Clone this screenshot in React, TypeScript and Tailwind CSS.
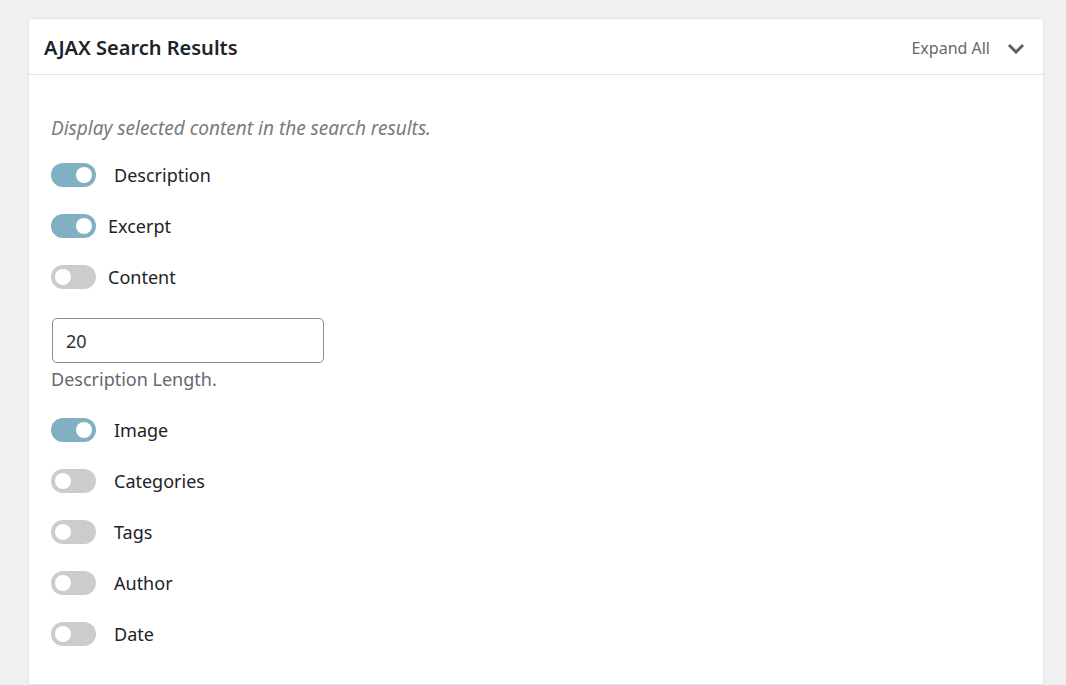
import React from "react";

const font = { fontFamily: '"Segoe UI", "Noto Sans", "Open Sans", sans-serif' };

type Row = { label: string; on: boolean; gap: string };

const Toggle = ({ on }: { on: boolean }) => (
  <span
    className={`relative inline-block h-[24px] w-[45px] shrink-0 rounded-full ${
      on ? "bg-[#80b0c2]" : "bg-[#cccccc]"
    }`}
  >
    <span
      className={`absolute top-[4px] h-[16px] w-[16px] rounded-full bg-white ${
        on ? "left-[25px]" : "left-[4px]"
      }`}
    />
  </span>
);

const ToggleRow = ({ label, on, gap }: Row) => (
  <div className={`flex h-[24px] items-center ${gap}`}>
    <Toggle on={on} />
    <span className="text-[18px] leading-[24px] text-[#1d2327]">{label}</span>
  </div>
);

const top: Row[] = [
  { label: "Description", on: true, gap: "gap-[18px]" },
  { label: "Excerpt", on: true, gap: "gap-[12px]" },
  { label: "Content", on: false, gap: "gap-[12px]" },
];

const bottom: Row[] = [
  { label: "Image", on: true, gap: "gap-[18px]" },
  { label: "Categories", on: false, gap: "gap-[18px]" },
  { label: "Tags", on: false, gap: "gap-[18px]" },
  { label: "Author", on: false, gap: "gap-[18px]" },
  { label: "Date", on: false, gap: "gap-[18px]" },
];

export default function App() {
  return (
    <div className="min-h-[685px] bg-[#f0f0f1] px-[28px] pt-[18px]" style={font}>
      <div className="h-[667px] w-[1016px] rounded-t-[5px] border border-[#e2e4e7] bg-white">
        <div className="flex h-[56px] items-center justify-between border-b border-[#e2e4e7] pl-[15px] pr-[18px] pt-[3px]">
          <h2 className="text-[20px] font-semibold leading-[28px] text-[#1d2327]">AJAX Search Results</h2>
          <button className="flex items-center gap-[17px] text-[16px] leading-[24px] text-[#646970]">
            Expand All
            <svg width="18" height="12" viewBox="0 0 18 12" fill="none">
              <path d="M2 3l7 7 7-7" stroke="#5b6066" strokeWidth="3" />
            </svg>
          </button>
        </div>
        <div className="px-[22px] pt-[41px]">
          <p className="h-[24px] text-[19px] italic leading-[24px] text-[#787c82]">
            Display selected content in the search results.
          </p>
          <div className="mt-[23px] flex flex-col gap-[27px]">
            {top.map((r) => (
              <ToggleRow key={r.label} {...r} />
            ))}
          </div>
          <input
            defaultValue="20"
            className="ml-[1px] mt-[29px] block h-[45px] w-[272px] rounded-[5px] border border-[#8c8f94] px-[13px] text-[18px] text-[#2c3338] outline-none"
          />
          <p className="mt-[4px] h-[24px] text-[18px] leading-[24px] text-[#646970]">Description Length.</p>
          <div className="mt-[27px] flex flex-col gap-[27px]">
            {bottom.map((r) => (
              <ToggleRow key={r.label} {...r} />
            ))}
          </div>
        </div>
      </div>
    </div>
  );
}
